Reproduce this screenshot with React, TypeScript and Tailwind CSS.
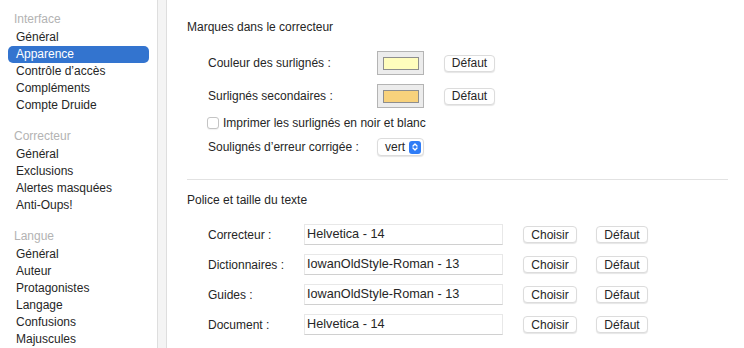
import React from 'react';

const font = { fontFamily: '"Liberation Sans", Arial, sans-serif' };

const sections = [
  { title: 'Interface', items: ['Général', 'Apparence', 'Contrôle d’accès', 'Compléments', 'Compte Druide'] },
  { title: 'Correcteur', items: ['Général', 'Exclusions', 'Alertes masquées', 'Anti-Oups!'] },
  { title: 'Langue', items: ['Général', 'Auteur', 'Protagonistes', 'Langage', 'Confusions', 'Majuscules'] },
];

const fonts = [
  { label: 'Correcteur :', value: 'Helvetica - 14' },
  { label: 'Dictionnaires :', value: 'IowanOldStyle-Roman - 13' },
  { label: 'Guides :', value: 'IowanOldStyle-Roman - 13' },
  { label: 'Document :', value: 'Helvetica - 14' },
];

function MacButton({ children, width }: { children: React.ReactNode; width: string }) {
  return (
    <button
      className={`${width} h-[17px] flex items-center justify-center rounded-[4px] bg-white border border-[#dcdcdc] shadow-[0_1px_1px_rgba(0,0,0,0.1)] text-[12px] text-[#262626] leading-none`}
    >
      {children}
    </button>
  );
}

function ColorWell({ color }: { color: string }) {
  return (
    <div className="w-[47px] h-[24px] bg-[#ececec] border border-[#b4b4b4] flex items-center justify-center">
      <div className="w-[36px] h-[13px] border border-[#8e8e8e]" style={{ backgroundColor: color }} />
    </div>
  );
}

export default function App() {
  return (
    <div className="w-[744px] h-[348px] flex bg-white overflow-hidden text-[#262626]" style={font}>
      {/* Sidebar */}
      <div className="w-[157px] shrink-0 pt-[11px] text-[12px] overflow-hidden">
        {sections.map((s, i) => (
          <div key={s.title} className={i > 0 ? 'mt-[14px]' : ''}>
            <div className="h-[17px] leading-[17px] pl-[14px] text-[#b3b3b3]">{s.title}</div>
            <div className="mt-[1px]">
              {s.items.map((item) =>
                i === 0 && item === 'Apparence' ? (
                  <div
                    key={item}
                    className="mx-[8px] h-[17px] leading-[17px] pl-[8px] rounded-[5px] bg-[#3374cf] text-white"
                  >
                    {item}
                  </div>
                ) : (
                  <div key={item} className="h-[17px] leading-[17px] pl-[16px]">
                    {item}
                  </div>
                )
              )}
            </div>
          </div>
        ))}
      </div>

      {/* Splitter */}
      <div className="w-[10px] shrink-0 bg-[#f4f4f4] border-x border-[#dedede]" />

      {/* Main panel */}
      <div className="flex-1 pl-[20px] pr-[16px] pt-[19px] text-[12px]">
        <div className="h-[17px] leading-[17px]">Marques dans le correcteur</div>

        <div className="mt-[15px] pl-[21px] h-[24px] flex items-center">
          <span className="w-[169px]">Couleur des surlignés :</span>
          <ColorWell color="#fffdbd" />
          <div className="ml-[20px]">
            <MacButton width="w-[51px]">Défaut</MacButton>
          </div>
        </div>

        <div className="mt-[9px] pl-[21px] h-[24px] flex items-center">
          <span className="w-[169px]">Surlignés secondaires :</span>
          <ColorWell color="#f8d27c" />
          <div className="ml-[20px]">
            <MacButton width="w-[51px]">Défaut</MacButton>
          </div>
        </div>

        <div className="mt-[6px] pl-[20px] h-[17px] flex items-center">
          <div className="w-[12px] h-[12px] rounded-[3px] border border-[#c4c4c4] bg-white shadow-[0_1px_1px_rgba(0,0,0,0.06)]" />
          <span className="ml-[4px]">Imprimer les surlignés en noir et blanc</span>
        </div>

        <div className="mt-[7px] pl-[21px] h-[18px] flex items-center">
          <span className="w-[169px]">Soulignés d’erreur corrigée :</span>
          <div className="w-[47px] h-[18px] rounded-[4px] bg-white border border-[#dcdcdc] shadow-[0_1px_1px_rgba(0,0,0,0.1)] flex items-center pl-[7px] pr-[2px]">
            <span className="flex-1 leading-none">vert</span>
            <div className="w-[12px] h-[13px] rounded-[3px] bg-[#2f7cf6] flex items-center justify-center">
              <svg width="8" height="10" viewBox="0 0 8 10" fill="none" stroke="white" strokeWidth="1.4" strokeLinecap="round" strokeLinejoin="round">
                <path d="M2 4 L4 2 L6 4" />
                <path d="M2 6 L4 8 L6 6" />
              </svg>
            </div>
          </div>
        </div>

        <div className="mt-[23px] h-px bg-[#e2e2e2]" />

        <div className="mt-[12px] h-[17px] leading-[17px]">Police et taille du texte</div>

        <div className="mt-[15px] flex flex-col gap-[9px]">
          {fonts.map((f) => (
            <div key={f.label} className="pl-[21px] h-[21px] flex items-center">
              <span className="w-[96px]">{f.label}</span>
              <div className="w-[199px] h-[21px] bg-white border border-[#e8e8e8] border-b-[#d0d0d0] flex items-center pl-[2px] text-[12.7px]">
                {f.value}
              </div>
              <div className="ml-[20px]">
                <MacButton width="w-[54px]">Choisir</MacButton>
              </div>
              <div className="ml-[19px]">
                <MacButton width="w-[52px]">Défaut</MacButton>
              </div>
            </div>
          ))}
        </div>
      </div>
    </div>
  );
}
